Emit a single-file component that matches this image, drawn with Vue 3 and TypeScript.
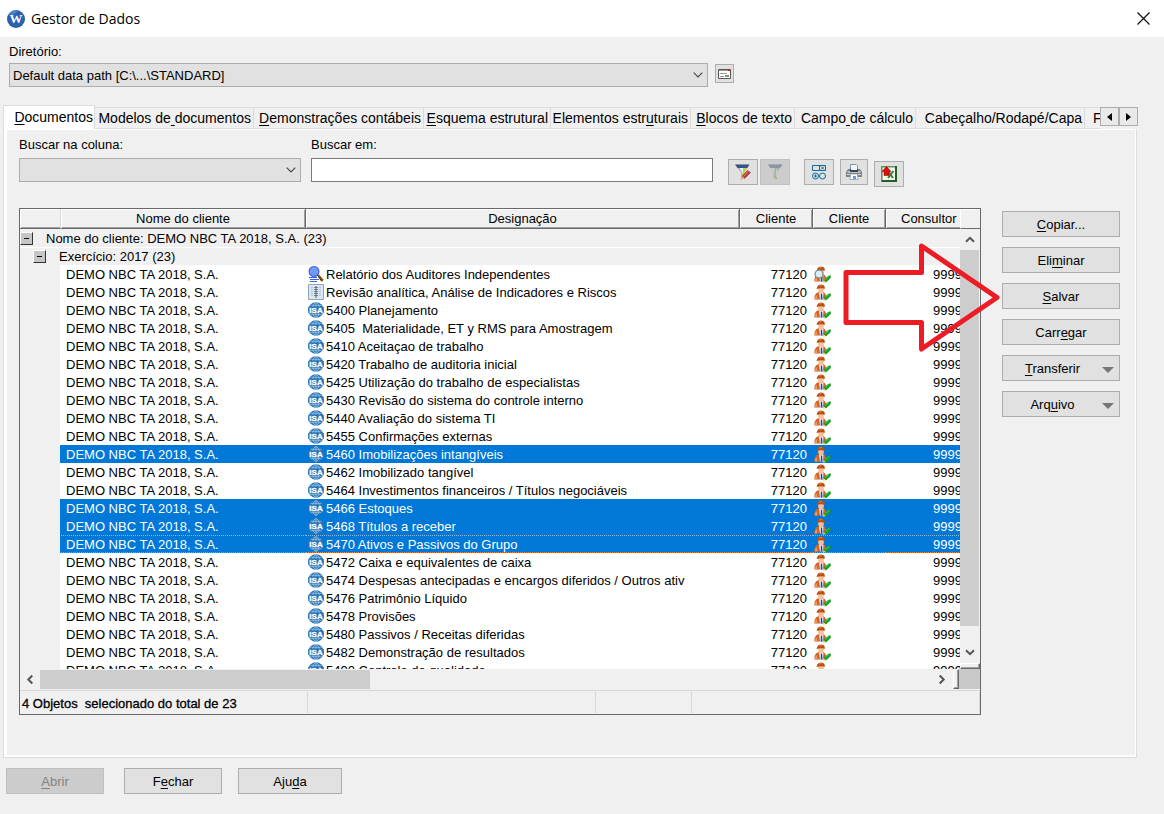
<script setup lang="ts">
import { ref } from 'vue'

type Accel = [string, string, string]
interface Tab { label: Accel; width: number }
interface Doc { id: number; name: string; kind: 'search' | 'sheet' | 'isa'; selected?: boolean; focused?: boolean }

const activeTab = ref(0)
const tabs: Tab[] = [
  { label: ['', 'D', 'ocumentos'], width: 92 },
  { label: ['Modelos de', ' ', 'documentos'], width: 159 },
  { label: ['', 'D', 'emonstrações contábeis'], width: 170 },
  { label: ['', 'E', 'squema estrutural'], width: 127 },
  { label: ['Elementos estr', 'u', 'turais'], width: 140 },
  { label: ['', 'B', 'locos de texto'], width: 104 },
  { label: ['Campo', ' ', 'de cálculo'], width: 121 },
  { label: ['Cabeçalho/Rodapé/Capa', '', ''], width: 169 },
  { label: ['F', '', ''], width: 80 },
]

const names: string[] = [
  'Relatório dos Auditores Independentes',
  'Revisão analítica, Análise de Indicadores e Riscos',
  '5400 Planejamento',
  '5405\u00a0 Materialidade, ET y RMS para Amostragem',
  '5410 Aceitaçao de trabalho',
  '5420 Trabalho de auditoria inicial',
  '5425 Utilização do trabalho de especialistas',
  '5430 Revisão do sistema do controle interno',
  '5440 Avaliação do sistema TI',
  '5455 Confirmações externas',
  '5460 Imobilizações intangíveis',
  '5462 Imobilizado tangível',
  '5464 Investimentos financeiros / Títulos negociáveis',
  '5466 Estoques',
  '5468 Títulos a receber',
  '5470 Ativos e Passivos do Grupo',
  '5472 Caixa e equivalentes de caixa',
  '5474 Despesas antecipadas e encargos diferidos / Outros ativ',
  '5476 Patrimônio Líquido',
  '5478 Provisões',
  '5480 Passivos / Receitas diferidas',
  '5482 Demonstração de resultados',
  '5490 Controle de qualidade',
]
const docs: Doc[] = names.map((name, id) => ({
  id,
  name,
  kind: id === 0 ? 'search' : id === 1 ? 'sheet' : 'isa',
  selected: [10, 13, 14, 15].includes(id),
  focused: id === 15,
}))

const actions: { label: Accel; menu?: boolean }[] = [
  { label: ['', 'C', 'opiar...'] },
  { label: ['Eli', 'm', 'inar'] },
  { label: ['', 'S', 'alvar'] },
  { label: ['Carr', 'e', 'gar'] },
  { label: ['', 'T', 'ransferir'], menu: true },
  { label: ['Arq', 'u', 'ivo'], menu: true },
]
</script>

<template>
  <div class="window">
    <svg class="defs" width="0" height="0" aria-hidden="true">
      <symbol id="person" viewBox="0 0 17 17">
        <path d="M.5 15.500c-.5-3.500 1-6.500 3.600-7.300L7 9l2.700-.8C12 9.500 12.500 12 12 15.500H7.500z" fill="#d4652a" />
        <path d="M.8 15.500c0-2.500.7-3.500 1.900-4.300l.7 4.300z" fill="#f09a5e" />
        <path d="M5.200 8.700h4.200L9 15.500H6z" fill="#fff" />
        <path d="M6.800 9.500h1.400l.3 6H6.700z" fill="#1d3fa8" />
        <path d="M4.200 4h5.600v3C9.400 8.700 8.300 9.400 7 9.400S4.700 8.600 4.200 7z" fill="#f5c198" />
        <path d="M2.500 5C3.200 4.300 2.800.8 7 .5c3.700 0 3.900 2.900 3.900 4.300-2.900-.9-5.400-.9-8.400.2z" fill="#b94d12" />
        <path d="M5 2.300c1-.8 2-.8 3-.6" stroke="#ef8a42" fill="none" />
        <path d="M9.600 14l4.400-4c1.100-.6 2.100-.7 2.900-.2.100 1.500-.3 2.500-1.200 3.300l-3.200 2.900-2.200.2z" fill="#189a26" />
        <path d="M11.500 13.600l3.700-3.200" stroke="#4fd24c" />
        <path d="M9.600 14l-.8 2.800 2.800-.9z" fill="#f3d44b" />
      </symbol>
      <symbol id="chevron" viewBox="0 0 10 6"><path d="M.7.700L5 5 9.300.7" fill="none" stroke="#444" stroke-width="1.100" /></symbol>
      <symbol id="scroll" viewBox="0 0 10 7"><path d="M1 5.800l4-4 4 4" fill="none" stroke="#555" stroke-width="2" /></symbol>
    </svg>

    <header class="titlebar">
      <svg class="logo" viewBox="0 0 18 18" aria-hidden="true">
        <circle cx="9" cy="9" r="9" fill="#2a62ac" />
        <path d="M2 4.500A9 9 0 0 1 12 .6L6 5z" fill="#4784c7" />
        <text x="9" y="13" text-anchor="middle" font-family="Liberation Serif, serif" font-weight="bold" font-size="13" fill="#fff">W</text>
      </svg>
      <h1>Gestor de Dados</h1>
      <button class="close" type="button" aria-label="Fechar janela">
        <svg viewBox="0 0 13 13"><path d="M.5.500l12 12M12.500.500l-12 12" stroke="#111" stroke-width="1.200" /></svg>
      </button>
    </header>

    <section class="directory">
      <label for="dir">Diretório:</label>
      <div class="directory-row">
        <div class="combo wide">
          <select id="dir"><option>Default data path [C:\...\STANDARD]</option></select>
          <svg class="arrow"><use href="#chevron" /></svg>
        </div>
        <button class="btn browse" type="button" aria-label="Procurar diretório">
          <svg viewBox="0 0 13 12">
            <path d="M.5 1.500h12v9H.5z" fill="#fff" stroke="#555" />
            <path d="M1 2.500h9" stroke="#999" />
            <path d="M2 5.500h7M2 8.500h4" stroke="#999" />
            <path d="M7 7h4v2H7z" fill="#888" />
            <path d="M10 1h2v2h-2z" fill="#d21f1f" />
          </svg>
        </button>
      </div>
    </section>

    <main class="tabs">
      <div class="tabbar">
        <nav class="tablist" role="tablist">
          <button
            v-for="(tab, i) in tabs" :key="i" type="button" role="tab" class="tab"
            :class="{ active: i === activeTab }" :aria-selected="i === activeTab"
            :style="{ width: tab.width + 'px' }" @click="activeTab = i"
          >{{ tab.label[0] }}<u>{{ tab.label[1] }}</u>{{ tab.label[2] }}</button>
        </nav>
        <div class="tabscroll">
          <button type="button" aria-label="Separadores anteriores"><svg viewBox="0 0 5 8"><path d="M5 0v8L0 4z" /></svg></button>
          <button type="button" aria-label="Separadores seguintes"><svg viewBox="0 0 5 8"><path d="M0 0v8l5-4z" /></svg></button>
        </div>
      </div>

      <div class="panel">
        <div class="toolbar">
          <div class="field column-field">
            <label for="col">Buscar na coluna:</label>
            <div class="combo">
              <select id="col"><option></option></select>
              <svg class="arrow"><use href="#chevron" /></svg>
            </div>
          </div>
          <div class="field text-field">
            <label for="term">Buscar em:</label>
            <input id="term" type="text">
          </div>
          <div class="tools">
            <button class="btn tool" type="button" aria-label="Editar filtro">
              <svg viewBox="0 0 16 16">
                <path d="M0 .5h14.500L9.500 8v7.500l-3.500-2V8z" fill="#b4d63a" />
                <path d="M0 .5h14.500l-2.300 3.500H2.500z" fill="#3a4f94" />
                <path d="M2.500 4h4v9L6 8z" fill="#a9b6bf" />
                <path d="M5 4h3v6z" fill="#eef3f3" />
                <path d="M5.500 15.500L7 12l5.500-6L16 8.500l-6 6z" fill="#b4393c" />
                <path d="M8.500 12.500L13.500 7" stroke="#e78680" />
                <path d="M5.500 15.500L7 12.200l2.600 2.200z" fill="#e6c594" />
              </svg>
            </button>
            <button class="btn tool off" type="button" disabled aria-label="Filtro">
              <svg viewBox="0 0 16 16">
                <path d="M1 .5h14.500L10 8v7.500l-3.500-2V8z" fill="#a9b58e" />
                <path d="M1 .5h14.500L13 4H3.500z" fill="#8b93ae" />
                <path d="M3.500 4h4v9L6.500 8zM9 5h1v8H9z" fill="#c4cbc9" />
              </svg>
            </button>
            <button class="btn tool apart" type="button" aria-label="Campos">
              <svg viewBox="0 0 16 16" fill="none" stroke="#0b6ea5">
                <path d="M1.500 1.500h13v5h-13zM8.500 1.500v5M10 2.500l3 3M13 2.500l-3 3" />
                <circle cx="4.500" cy="12" r="3" /><circle cx="11.500" cy="12" r="3" />
                <path d="M3 12h3M4.500 10.500v3" />
              </svg>
            </button>
            <button class="btn tool print" type="button" aria-label="Imprimir">
              <svg viewBox="0 0 16 16">
                <path d="M4.500.500h6l1 1V7h-7z" fill="#fff" stroke="#8392a4" />
                <path d="M2 5h12l2 3v5H0V8z" fill="#7d8289" />
                <path d="M1.500 7h13v2h-13z" fill="#b9c0c8" />
                <path d="M4 5h8v3H4z" fill="#40454c" />
                <path d="M5 1h6v5H5z" fill="#f4f8fc" />
                <path d="M1 10.500h14" stroke="#d7dade" />
                <path d="M4.500 10h7l.5 5.500H4z" fill="#fff" stroke="#8392a4" stroke-width=".7" />
                <path d="M7 12h3v3H7z" fill="#5d9ee5" />
              </svg>
            </button>
            <button class="btn tool excel" type="button" aria-label="Exportar para Excel">
              <svg viewBox="0 0 16 16">
                <path d="M.8.800h14.400v14.400H.8z" fill="#f4faee" stroke="#5d9150" stroke-width="1.500" />
                <path d="M15 0v15H1" fill="none" stroke="#285b2a" stroke-width="2" />
                <path d="M7 5l5 7M12.500 5L7 12" stroke="#378338" stroke-width="2" />
                <path d="M5.500.500l4.500 5H8v4H3v-4H1z" fill="#e60b0b" stroke="#8b1010" stroke-width=".6" />
              </svg>
            </button>
          </div>
        </div>

        <div class="content">
          <div class="grid">
            <div class="viewport-row">
              <div class="viewport">
                <table>
                  <colgroup><col class="c-gutter"><col class="c-client"><col><col class="c-num"><col class="c-num"><col class="c-last"></colgroup>
                  <thead>
                    <tr><th class="plain"></th><th>Nome do cliente</th><th>Designação</th><th>Cliente</th><th>Cliente</th><th class="last">Consultor</th></tr>
                  </thead>
                  <tbody>
                    <tr class="group first"><td colspan="6"><div><button type="button" aria-label="Recolher cliente"></button>Nome do cliente: DEMO NBC TA 2018, S.A. (23)</div></td></tr>
                    <tr class="group second"><td colspan="6"><div><button type="button" aria-label="Recolher exercício"></button>Exercício: 2017 (23)</div></td></tr>
                    <tr v-for="doc in docs" :key="doc.id" class="doc" :class="{ selected: doc.selected, focused: doc.focused }">
                      <td class="gutter"></td>
                      <td class="client">DEMO NBC TA 2018, S.A.</td>
                      <td class="name">
                        <div>
                          <svg v-if="doc.kind === 'search'" viewBox="0 0 16 16">
                            <path d="M1 11.500h8M2 13.500h9M2 15.500h7" stroke="#3560e8" />
                            <circle cx="6" cy="5.500" r="4.900" fill="#7fa6f8" stroke="#3f62e0" stroke-width="1.200" />
                            <path d="M2.500 4h7M2.500 6h7M3 8h6" stroke="#5a83f0" stroke-width=".8" />
                            <path d="M9.500 9l1.500-.5 4.500 5-1 2h-1.500z" fill="#8a5a18" />
                            <path d="M9.500 9.500l4 5" stroke="#3b2710" />
                          </svg>
                          <svg v-else-if="doc.kind === 'sheet'" viewBox="0 0 16 16">
                            <path d="M.5.500h15v15H.5z" fill="#dbe6f3" stroke="#8fa5bd" />
                            <path d="M3 3.500h2M3 5.500h2M3 7.500h2M3 9.500h2M3 11.500h2M11 3.500h2M11 5.500h2M11 7.500h2M11 9.500h2M11 11.500h2" stroke="#b4c2d2" />
                            <path d="M6 3.500h4M6 5.500h4M6 7.500h4M6 9.500h4M6 11.500h4" stroke="#7c8998" />
                            <path d="M8 2v12" stroke="#53606e" />
                          </svg>
                          <svg v-else viewBox="0 0 16 16">
                            <circle cx="8" cy="8" r="7.800" fill="#2673b8" />
                            <g fill="none" stroke="#a9cbe8" stroke-width=".7">
                              <ellipse cx="8" cy="8" rx="3.600" ry="7.400" />
                              <path d="M8 .5v15M2.500 3.300h11M2.500 12.700h11" />
                            </g>
                            <path d="M.3 5h15.400v6H.3z" fill="#2673b8" />
                            <text x="8" y="11" text-anchor="middle" font-family="Liberation Sans, sans-serif" font-size="8" font-weight="bold" fill="#fff" stroke="#fff" stroke-width=".3">ISA</text>
                          </svg>
                          <span>{{ doc.name }}</span>
                        </div>
                      </td>
                      <td class="num">77120</td>
                      <td class="who">
                        <svg viewBox="0 0 17 17">
                          <use href="#person" />
                          <g v-if="doc.id === 0">
                            <circle cx="5" cy="8" r="3.900" fill="#dceefa" stroke="#858c94" stroke-width="1.300" />
                            <path d="M8 11l3 3" stroke="#b88a3e" stroke-width="2" />
                          </g>
                        </svg>
                      </td>
                      <td class="consultant">9999</td>
                    </tr>
                  </tbody>
                </table>
              </div>
              <div class="vbar">
                <div class="cap"></div>
                <button type="button" aria-label="Subir"><svg><use href="#scroll" /></svg></button>
                <div class="track"><div class="thumb"></div></div>
                <button type="button" class="down" aria-label="Descer"><svg><use href="#scroll" /></svg></button>
                <div class="split"></div>
              </div>
            </div>
            <div class="hbar">
              <button type="button" class="left" aria-label="Esquerda"><svg><use href="#scroll" /></svg></button>
              <div class="track"><div class="thumb"></div></div>
              <button type="button" class="right" aria-label="Direita"><svg><use href="#scroll" /></svg></button>
              <div class="split"></div>
              <div class="corner"></div>
            </div>
            <div class="status">
              <span>4 Objetos&nbsp; selecionado do total de 23</span><span></span><span></span><span></span>
            </div>
          </div>

          <div class="actions">
            <button v-for="(a, i) in actions" :key="i" type="button" class="btn" :class="{ menu: a.menu }">
              <span>{{ a.label[0] }}<u>{{ a.label[1] }}</u>{{ a.label[2] }}</span>
              <svg v-if="a.menu" viewBox="0 0 12 6"><path d="M0 0h12L6 6z" fill="#777" /></svg>
            </button>
          </div>

          <svg class="pointer" viewBox="0 0 158 110" aria-hidden="true">
            <path d="M4 29.500h75.500V3L155 54.500 79.500 106V79.500H4z" fill="none" stroke="#ed1c24" stroke-width="5" stroke-linejoin="round" />
          </svg>
        </div>
      </div>
    </main>

    <footer>
      <button class="btn off" type="button" disabled><span><u>A</u>brir</span></button>
      <button class="btn" type="button"><span>F<u>e</u>char</span></button>
      <button class="btn help" type="button"><span>Aju<u>d</u>a</span></button>
    </footer>
  </div>
</template>

<style>
body { margin: 0; }
</style>

<style scoped>
* { box-sizing: border-box; }
.window {
  display: flex; flex-direction: column; height: 100vh; overflow: hidden;
  background: #f0f0f0; color: #000; font: 13px/16px "Liberation Sans", Arial, sans-serif;
}
.defs { position: absolute; }
button, select, input { font: inherit; color: inherit; margin: 0; border-radius: 0; }
svg { display: block; }
u { text-underline-offset: 2px; white-space: pre; }

.titlebar { display: flex; align-items: center; flex: none; height: 37px; padding: 0 14px 0 7px; background: #fff; }
.logo { width: 18px; height: 18px; }
h1 { flex: 1; margin: 0 0 0 6px; font: 14px/20px "Open Sans", "Noto Sans", sans-serif; }
.close { padding: 0; border: 0; background: none; }
.close svg { width: 13px; height: 13px; }

.btn {
  display: flex; align-items: center; justify-content: center; padding: 0;
  border: 1px solid #adadad; background: #e1e1e1;
}
.btn.off { background: #ccc; border-color: #bfbfbf; color: #838383; }

.directory { flex: none; padding: 7px 9px 0; }
.directory label { display: block; height: 19px; }
.directory-row { display: flex; align-items: flex-start; gap: 7px; }
.combo { position: relative; width: 100%; }
.combo.wide { width: 61%; }
.combo select {
  display: block; width: 100%; height: 24px; padding: 1px 20px 0 3px;
  appearance: none; border: 1px solid #adadad; background: #e1e1e1;
}
.combo .arrow { position: absolute; right: 5px; top: 9px; width: 10px; height: 6px; pointer-events: none; }
.browse { width: 19px; height: 19px; margin-top: 1px; }
.browse svg { width: 13px; height: 12px; }

.tabs { display: flex; flex-direction: column; flex: 1; min-height: 0; margin: 18px 27px 0 3px; }
.tabbar { display: flex; flex: none; height: 24px; align-items: flex-end; }
.tablist { display: flex; flex: 1; min-width: 0; overflow: hidden; align-items: flex-end; height: 24px; }
.tab {
  flex: none; height: 22px; padding: 0 2px 0 0; font-size: 14px; line-height: 20px; text-align: right; white-space: nowrap;
  border: 1px solid #dcdcdc; border-width: 1px 1px 1px 0; background: #f0f0f0;
}
.tab:last-child { text-align: left; padding-left: 8px; }
.tab.active { height: 24px; padding: 0 1px 2px; border-width: 1px 1px 0; background: #fff; }
.tabscroll { display: flex; flex: none; height: 22px; margin-right: -1px; align-items: flex-start; }
.tabscroll button { display: flex; align-items: center; justify-content: center; width: 19px; height: 19px; padding: 0; border: 1px solid #adadad; background: #e9e9e9; }
.tabscroll svg { width: 5px; height: 8px; }

.panel {
  display: flex; flex-direction: column; flex: 1; min-height: 0; padding: 6px 16px 42px 15px;
  border: 1px solid #dcdcdc; border-top: 0; box-shadow: inset 3px 1px #fff, inset -1px -2px #fff;
}
.toolbar { display: flex; flex: none; gap: 10px; align-items: flex-start; }
.field label { display: block; height: 23px; line-height: 20px; }
.column-field { flex: 0 1 282px; }
.text-field { flex: 0 1 402px; }
.text-field input { display: block; width: 100%; height: 24px; padding: 0 4px; border: 1px solid #7a7a7a; background: #fff; }
.tools { display: flex; flex: none; gap: 2px; margin: 24px 0 0 5px; }
.tool { width: 30px; height: 26px; }
.tool svg { width: 16px; height: 16px; }
.apart { margin-left: 12px; }
.print { width: 28px; margin-left: 4px; }
.excel { margin: 2px 0 0 4px; }

.content { position: relative; display: flex; flex: 1; min-height: 0; margin-top: 21px; }
.grid { display: flex; flex-direction: column; flex: 1; min-width: 0; border: 1px solid #696969; }
.viewport-row { display: flex; flex: 1; min-height: 0; }
.viewport { flex: 1; min-width: 0; overflow: hidden; background: #fff; }
table { width: 100%; table-layout: fixed; border-collapse: separate; border-spacing: 0; }
.c-gutter { width: 41px; }
.c-client { width: 245px; }
.c-num { width: 73px; }
.c-last { width: 74px; }
th {
  height: 20px; padding: 1px 0 0; font-weight: normal; line-height: 18px; white-space: nowrap;
  background: #f0f0f0; border-bottom: 1px solid #696969; border-right: 1px solid #696969;
  box-shadow: inset 1px 1px #fff, inset -1px -1px #a0a0a0;
}
th.plain { border-right: 1px solid #d8d8d8; box-shadow: inset 1px 1px #fff, inset 0 -1px #a0a0a0; }
th.last { padding-left: 15px; text-align: left; border-right: 0; box-shadow: inset 1px 1px #fff, inset 0 -1px #a0a0a0; }
td { height: 18px; padding: 1px 0 0; line-height: 17px; white-space: nowrap; overflow: hidden; }
.group td { background: #f0f0f0; }
.group div { display: flex; align-items: center; height: 17px; }
.first td { border-bottom: 1px solid #fff; }
.group.second td { height: 17px; padding: 0; }
.second div { padding-left: 13px; }
.group button {
  display: flex; align-items: center; justify-content: center;
  width: 13px; height: 13px; margin-right: 13px; padding: 0; background: #c6c6c6;
  border: 1px solid; border-color: #fff #333 #333 #fff;
}
.group button::before { content: ""; width: 5px; height: 1px; background: #000; }
.doc .gutter { background: #f0f0f0; border-right: 1px solid #fff; }
.doc .client { padding-left: 5px; }
.doc .name, .doc .who { padding-top: 0; }
.name div { display: flex; align-items: center; height: 18px; padding-left: 2px; gap: 2px; }
.name span { padding-top: 1px; }
.name svg { flex: none; width: 16px; height: 16px; }
.doc .num { padding-right: 6px; text-align: right; }
.doc .who { padding-left: 1px; }
.who svg { width: 17px; height: 17px; }
.doc .consultant { padding-left: 47px; }
.selected td:not(.gutter) { background: #0078d7; color: #fff; }
.selected .gutter { border-right-color: #0078d7; }
.focused td:not(.gutter) {
  background-image: linear-gradient(90deg, #9bb6c8 50%, transparent 50%), linear-gradient(90deg, #ff8728 50%, transparent 50%);
  background-size: 2px 1px; background-repeat: repeat-x; background-position: 0 0, 0 100%;
}

.vbar { display: flex; flex-direction: column; flex: none; width: 20px; background: #f0f0f0; }
.vbar .cap { height: 20px; border-bottom: 1px solid #696969; border-left: 1px solid #fff; box-shadow: inset 0 1px #fff; }
.vbar button, .hbar button { display: flex; align-items: center; justify-content: center; flex: none; width: 20px; height: 21px; padding: 0; border: 0; background: none; }
.vbar svg, .hbar svg { width: 10px; height: 7px; }
.down svg { transform: rotate(180deg); }
.vbar .track { flex: 1; min-height: 0; }
.vbar .thumb { width: 19px; height: 96%; background: #cdcdcd; }
.vbar .split { flex: none; height: 6px; background: #f0f0f0; border: 1px solid; border-color: #fff #696969 #696969 #fff; box-shadow: inset -1px -1px #a0a0a0; }
.hbar { display: flex; flex: none; height: 21px; }
.hbar .left svg { transform: rotate(-90deg); }
.hbar .right svg { transform: rotate(90deg); }
.hbar .track { flex: 1; }
.hbar .thumb { width: 37%; height: 19px; margin-top: 1px; background: #cdcdcd; }
.hbar .split { width: 6px; height: 20px; border: 1px solid; border-color: #fff #696969 #696969 #fff; box-shadow: inset -1px -1px #a0a0a0; }
.hbar .corner { width: 21px; height: 20px; background: #c8c8c8; }
.hbar .right { margin-right: 1px; }
.status { display: flex; flex: none; height: 24px; border-top: 1px solid #d7d7d7; -webkit-text-stroke: 0.3px #000; }
.status span { width: 96px; margin: 1px 0; border-right: 1px solid #d7d7d7; padding-left: 2px; line-height: 23px; }
.status span:first-child { width: 288px; }
.status span:nth-child(2) { width: 288px; }
.status span:last-child { flex: 1; }

.actions { display: flex; flex-direction: column; flex: none; width: 118px; gap: 10px; margin: 3px 0 0 21px; }
.actions .btn { height: 26px; }
.btn span { padding-top: 1px; }
.actions .menu span { flex: 1; padding-left: 0; }
.actions .menu svg { width: 12px; height: 6px; margin: 3px 5px 0 0; }
.actions .menu { padding-left: 0; }
.pointer { position: absolute; right: 120px; top: 35px; width: 158px; height: 110px; pointer-events: none; }

footer { display: flex; flex: none; gap: 16px; padding: 10px 6px 20px; }
footer .btn { width: 98px; height: 26px; }
footer .btn.off { margin-right: 4px; }
footer .help { width: 104px; }
</style>
